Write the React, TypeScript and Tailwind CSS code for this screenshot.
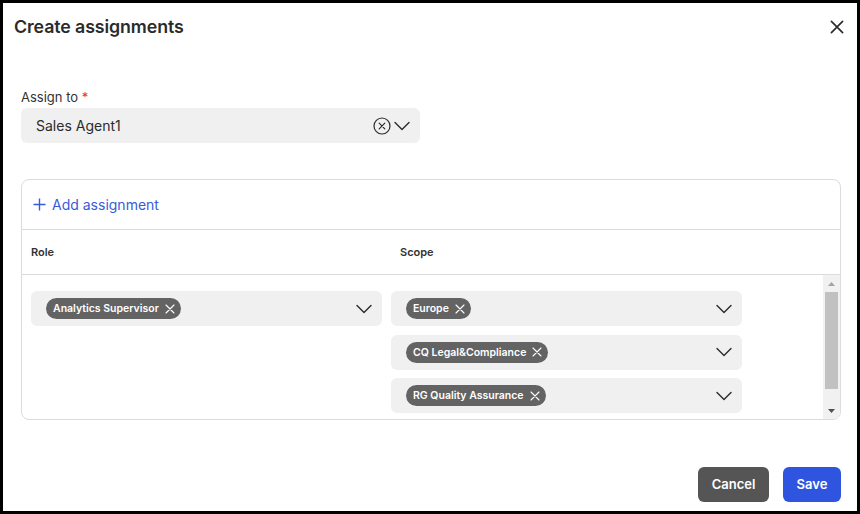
import React from "react";

function Chevron() {
  return (
    <svg width="16" height="10" viewBox="0 0 16 10" fill="none">
      <path d="M1 1.5l7 7 7-7" stroke="#2b2b2b" strokeWidth="1.4" strokeLinecap="round" strokeLinejoin="round" />
    </svg>
  );
}

function SmallX({ size = 10, color = "#ffffff", w = 1.3 }: { size?: number; color?: string; w?: number }) {
  return (
    <svg width={size} height={size} viewBox="0 0 10 10" fill="none">
      <path d="M1 1l8 8M9 1l-8 8" stroke={color} strokeWidth={w} strokeLinecap="round" />
    </svg>
  );
}

function Chip({ label }: { label: string }) {
  return (
    <span className="inline-flex items-center h-[21px] rounded-full bg-[#636363] pl-[7px] pr-[6px] gap-[6px] text-[10.5px] font-semibold text-white leading-[21px]">
      {label}
      <SmallX size={10} w={1.1} />
    </span>
  );
}

function TagSelect({ label }: { label: string }) {
  return (
    <div className="h-[35px] w-[351px] rounded-[6px] bg-[#f0f0f0] flex items-center justify-between pl-[15px] pr-[10px]">
      <Chip label={label} />
      <Chevron />
    </div>
  );
}

export default function App() {
  return (
    <div className="w-[860px] h-[514px] border-[3px] border-black bg-white flex flex-col font-['Inter',sans-serif] text-[#2b2b2b]">
      <div className="h-[47px] flex items-center justify-between pl-[11px] pr-[13px]">
        <h1 className="text-[17.8px] font-semibold tracking-[-0.1px] pt-px">Create assignments</h1>
        <SmallX size={14} color="#2b2b2b" w={1.2} />
      </div>

      <div className="mt-[39px] ml-[18px] text-[13px] leading-[16px] text-[#333]">
        Assign to <span className="text-[#d9363e]">*</span>
      </div>
      <div className="mt-[3px] ml-[18px] h-[35px] w-[399px] rounded-[6px] bg-[#f0f0f0] flex items-center justify-between pl-[15px] pr-[10px]">
        <span className="text-[14px]">Sales Agent1</span>
        <div className="flex items-center gap-[3px]">
          <svg width="18" height="18" viewBox="0 0 18 18" fill="none">
            <circle cx="9" cy="9" r="8" stroke="#2b2b2b" strokeWidth="1.2" />
            <path d="M6.2 6.2l5.6 5.6M11.8 6.2l-5.6 5.6" stroke="#2b2b2b" strokeWidth="1.2" strokeLinecap="round" />
          </svg>
          <Chevron />
        </div>
      </div>

      <div className="mt-[36px] ml-[18px] w-[820px] h-[241px] border border-[#dcdcdc] rounded-[8px] flex flex-col overflow-hidden">
        <div className="h-[50px] shrink-0 border-b border-[#dcdcdc] flex items-center pl-[11px] gap-[6px] text-[#3a5bd9]">
          <svg width="13" height="13" viewBox="0 0 13 13" fill="none">
            <path d="M6.5 0.5v12M0.5 6.5h12" stroke="#3a5bd9" strokeWidth="1.4" />
          </svg>
          <span className="text-[14px]">Add assignment</span>
        </div>
        <div className="h-[45px] shrink-0 border-b border-[#dcdcdc] flex items-center text-[11px] font-semibold text-[#333]">
          <span className="pl-[9px] w-[378px]">Role</span>
          <span>Scope</span>
        </div>
        <div className="flex-1 flex">
          <div className="flex-1 flex gap-[9px] pl-[9px] pt-[16px]">
            <div>
              <TagSelect label="Analytics Supervisor" />
            </div>
            <div className="flex flex-col gap-[8.5px]">
              <TagSelect label="Europe" />
              <TagSelect label="CQ Legal&Compliance" />
              <TagSelect label="RG Quality Assurance" />
            </div>
          </div>
          <div className="w-[17px] bg-[#f1f1f1] flex flex-col items-center">
            <div className="h-[17px] flex items-center justify-center">
              <svg width="7" height="4" viewBox="0 0 7 4"><path d="M0 4L3.5 0 7 4z" fill="#a3a3a3" /></svg>
            </div>
            <div className="w-[13px] h-[97px] bg-[#c1c1c1]" />
            <div className="flex-1" />
            <div className="h-[17px] flex items-center justify-center">
              <svg width="7" height="4" viewBox="0 0 7 4"><path d="M0 0L3.5 4 7 0z" fill="#505050" /></svg>
            </div>
          </div>
        </div>
      </div>

      <div className="mt-auto flex justify-end gap-[14px] pr-[16px] pb-[9px]">
        <button className="h-[35px] w-[71px] rounded-[6px] bg-[#555555] text-white text-[13px] font-semibold">Cancel</button>
        <button className="h-[35px] w-[58px] rounded-[6px] bg-[#2f55e0] text-white text-[13px] font-semibold">Save</button>
      </div>
    </div>
  );
}
